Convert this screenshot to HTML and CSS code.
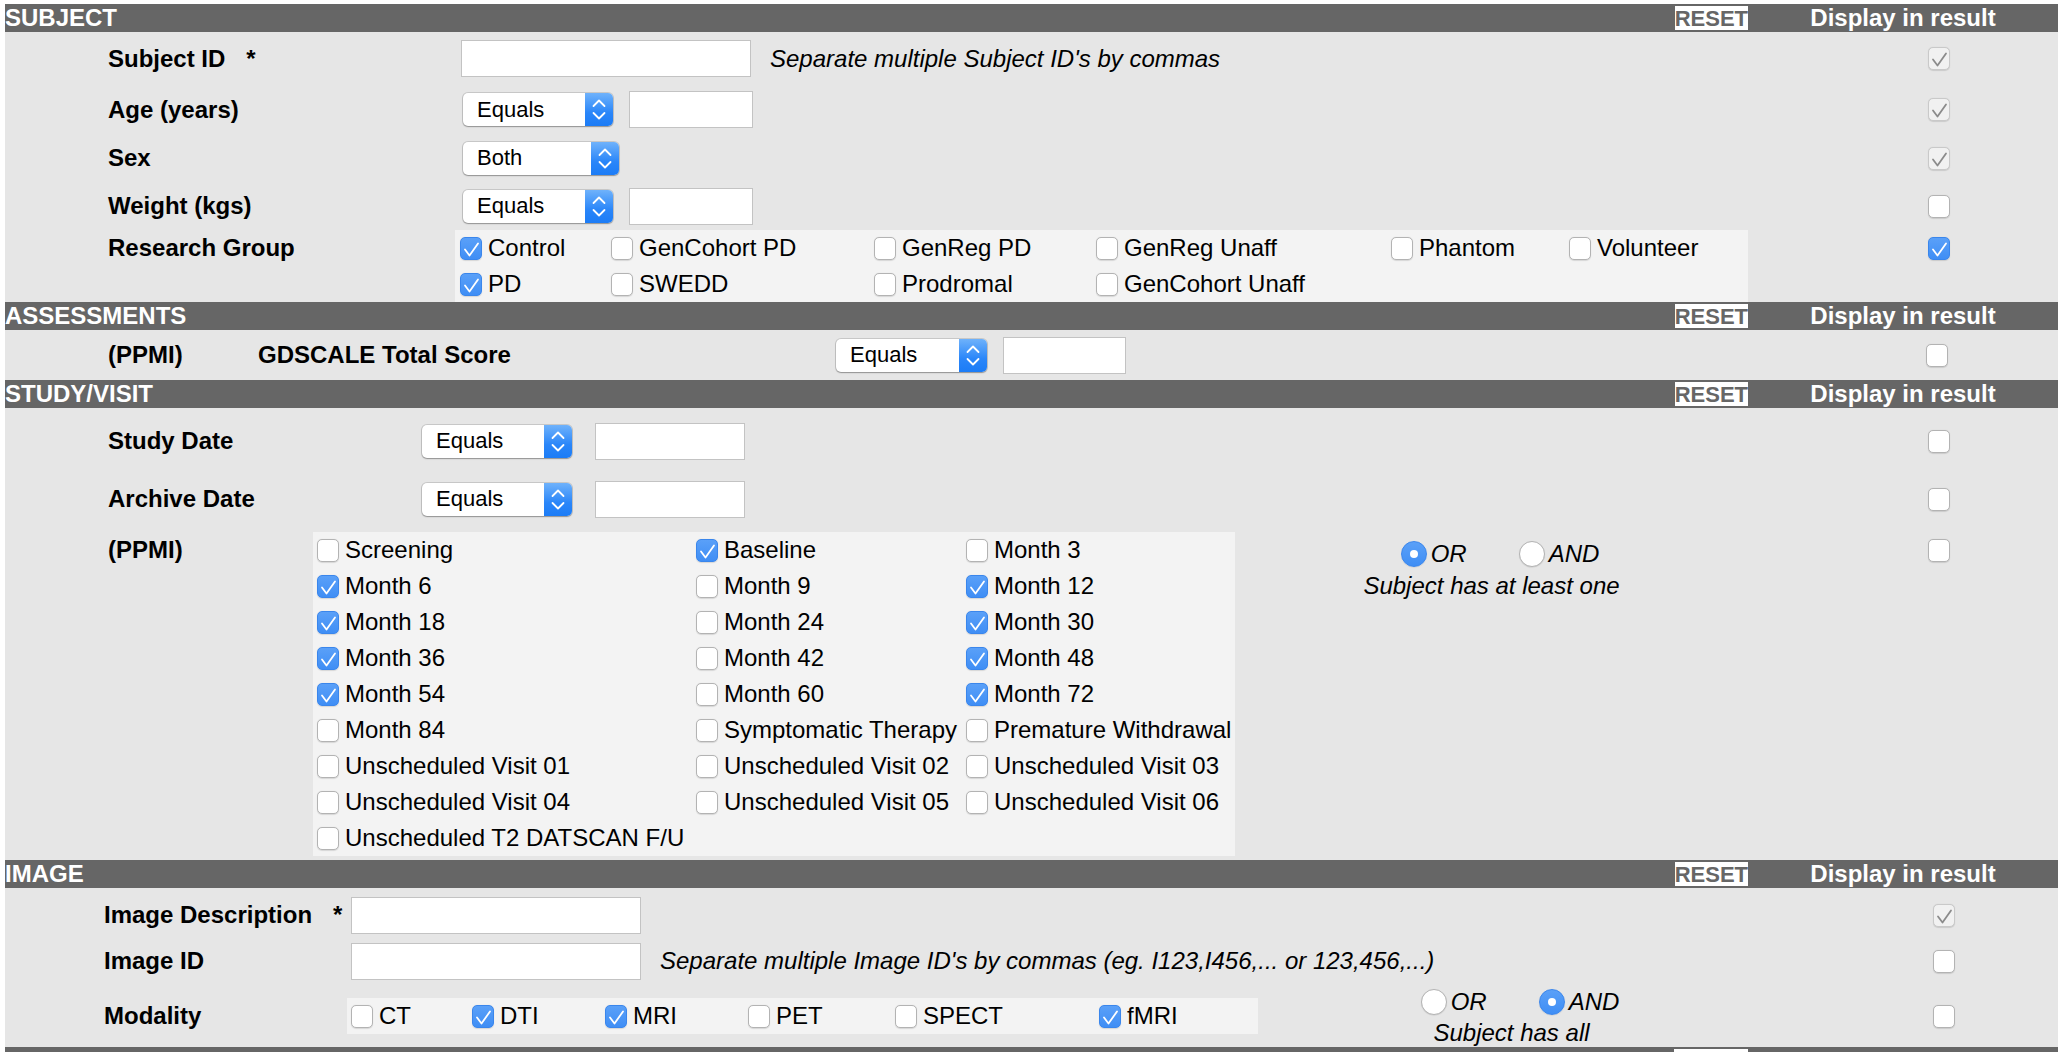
FILE: index.html
```html
<!DOCTYPE html>
<html lang="en">
<head>
<meta charset="utf-8">
<title>Advanced Search</title>
<link rel="stylesheet" href="styles.css">
</head>
<body>
<div class="page">

<section class="sec">
  <div class="bar"><span class="title">SUBJECT</span><span class="reset">RESET</span><span class="disp">Display in result</span></div>

  <div class="row h53">
    <div class="lbl w450">Subject ID<span class="req">*</span></div>
    <div class="ctl"><input type="text" class="txt w290 ml6"><span class="help">Separate multiple Subject ID's by commas</span></div>
    <div class="dcol"><span class="cb dis on"><svg viewBox="0 0 20 21"><path d="M4 11.5L8.5 17.5L17 5.5"/></svg></span></div>
  </div>

  <div class="row h49">
    <div class="lbl w450">Age (years)</div>
    <div class="ctl">
      <div class="sel w150 ml8"><span class="val">Equals</span><span class="arr"><svg viewBox="0 0 28 33"><path d="M8.5 13L14 7.5L19.5 13M8.5 20L14 25.5L19.5 20"/></svg></span></div>
      <input type="text" class="txt w124 ml16">
    </div>
    <div class="dcol"><span class="cb dis on"><svg viewBox="0 0 20 21"><path d="M4 11.5L8.5 17.5L17 5.5"/></svg></span></div>
  </div>

  <div class="row h48">
    <div class="lbl w450">Sex</div>
    <div class="ctl">
      <div class="sel w156 ml8"><span class="val">Both</span><span class="arr"><svg viewBox="0 0 28 33"><path d="M8.5 13L14 7.5L19.5 13M8.5 20L14 25.5L19.5 20"/></svg></span></div>
    </div>
    <div class="dcol"><span class="cb dis on"><svg viewBox="0 0 20 21"><path d="M4 11.5L8.5 17.5L17 5.5"/></svg></span></div>
  </div>

  <div class="row h48">
    <div class="lbl w450">Weight (kgs)</div>
    <div class="ctl">
      <div class="sel w150 ml8"><span class="val">Equals</span><span class="arr"><svg viewBox="0 0 28 33"><path d="M8.5 13L14 7.5L19.5 13M8.5 20L14 25.5L19.5 20"/></svg></span></div>
      <input type="text" class="txt w124 ml16">
    </div>
    <div class="dcol"><span class="cb"></span></div>
  </div>

  <div class="row top">
    <div class="lbl w450 lh36">Research Group</div>
    <div class="grp groups">
      <label class="opt"><span class="cb on"><svg viewBox="0 0 20 21"><path d="M4 11.5L8.5 17.5L17 5.5"/></svg></span>Control</label>
      <label class="opt"><span class="cb"></span>GenCohort PD</label>
      <label class="opt"><span class="cb"></span>GenReg PD</label>
      <label class="opt"><span class="cb"></span>GenReg Unaff</label>
      <label class="opt"><span class="cb"></span>Phantom</label>
      <label class="opt"><span class="cb"></span>Volunteer</label>
      <label class="opt"><span class="cb on"><svg viewBox="0 0 20 21"><path d="M4 11.5L8.5 17.5L17 5.5"/></svg></span>PD</label>
      <label class="opt"><span class="cb"></span>SWEDD</label>
      <label class="opt"><span class="cb"></span>Prodromal</label>
      <label class="opt"><span class="cb"></span>GenCohort Unaff</label>
    </div>
    <div class="dcol"><span class="cb on"><svg viewBox="0 0 20 21"><path d="M4 11.5L8.5 17.5L17 5.5"/></svg></span></div>
  </div>
</section>

<section class="sec">
  <div class="bar"><span class="title">ASSESSMENTS</span><span class="reset">RESET</span><span class="disp">Display in result</span></div>
  <div class="row h50">
    <div class="lbl w253">(PPMI)</div>
    <div class="lbl2 w578">GDSCALE Total Score</div>
    <div class="ctl">
      <div class="sel w151"><span class="val">Equals</span><span class="arr"><svg viewBox="0 0 28 33"><path d="M8.5 13L14 7.5L19.5 13M8.5 20L14 25.5L19.5 20"/></svg></span></div>
      <input type="text" class="txt w123 ml16">
    </div>
    <div class="dcol d-assess"><span class="cb"></span></div>
  </div>
</section>

<section class="sec">
  <div class="bar"><span class="title">STUDY/VISIT</span><span class="reset">RESET</span><span class="disp">Display in result</span></div>

  <div class="row h66">
    <div class="lbl w417">Study Date</div>
    <div class="ctl">
      <div class="sel w150"><span class="val">Equals</span><span class="arr"><svg viewBox="0 0 28 33"><path d="M8.5 13L14 7.5L19.5 13M8.5 20L14 25.5L19.5 20"/></svg></span></div>
      <input type="text" class="txt w150 ml23">
    </div>
    <div class="dcol"><span class="cb"></span></div>
  </div>

  <div class="row h50">
    <div class="lbl w417">Archive Date</div>
    <div class="ctl">
      <div class="sel w150"><span class="val">Equals</span><span class="arr"><svg viewBox="0 0 28 33"><path d="M8.5 13L14 7.5L19.5 13M8.5 20L14 25.5L19.5 20"/></svg></span></div>
      <input type="text" class="txt w150 ml23">
    </div>
    <div class="dcol"><span class="cb"></span></div>
  </div>

  <div class="row top visit-row">
    <div class="lbl w308 lh36">(PPMI)</div>
    <div class="grp visits">
      <label class="opt"><span class="cb"></span>Screening</label>
      <label class="opt"><span class="cb on"><svg viewBox="0 0 20 21"><path d="M4 11.5L8.5 17.5L17 5.5"/></svg></span>Baseline</label>
      <label class="opt"><span class="cb"></span>Month 3</label>
      <label class="opt"><span class="cb on"><svg viewBox="0 0 20 21"><path d="M4 11.5L8.5 17.5L17 5.5"/></svg></span>Month 6</label>
      <label class="opt"><span class="cb"></span>Month 9</label>
      <label class="opt"><span class="cb on"><svg viewBox="0 0 20 21"><path d="M4 11.5L8.5 17.5L17 5.5"/></svg></span>Month 12</label>
      <label class="opt"><span class="cb on"><svg viewBox="0 0 20 21"><path d="M4 11.5L8.5 17.5L17 5.5"/></svg></span>Month 18</label>
      <label class="opt"><span class="cb"></span>Month 24</label>
      <label class="opt"><span class="cb on"><svg viewBox="0 0 20 21"><path d="M4 11.5L8.5 17.5L17 5.5"/></svg></span>Month 30</label>
      <label class="opt"><span class="cb on"><svg viewBox="0 0 20 21"><path d="M4 11.5L8.5 17.5L17 5.5"/></svg></span>Month 36</label>
      <label class="opt"><span class="cb"></span>Month 42</label>
      <label class="opt"><span class="cb on"><svg viewBox="0 0 20 21"><path d="M4 11.5L8.5 17.5L17 5.5"/></svg></span>Month 48</label>
      <label class="opt"><span class="cb on"><svg viewBox="0 0 20 21"><path d="M4 11.5L8.5 17.5L17 5.5"/></svg></span>Month 54</label>
      <label class="opt"><span class="cb"></span>Month 60</label>
      <label class="opt"><span class="cb on"><svg viewBox="0 0 20 21"><path d="M4 11.5L8.5 17.5L17 5.5"/></svg></span>Month 72</label>
      <label class="opt"><span class="cb"></span>Month 84</label>
      <label class="opt"><span class="cb"></span>Symptomatic Therapy</label>
      <label class="opt"><span class="cb"></span>Premature Withdrawal</label>
      <label class="opt"><span class="cb"></span>Unscheduled Visit 01</label>
      <label class="opt"><span class="cb"></span>Unscheduled Visit 02</label>
      <label class="opt"><span class="cb"></span>Unscheduled Visit 03</label>
      <label class="opt"><span class="cb"></span>Unscheduled Visit 04</label>
      <label class="opt"><span class="cb"></span>Unscheduled Visit 05</label>
      <label class="opt"><span class="cb"></span>Unscheduled Visit 06</label>
      <label class="opt"><span class="cb"></span>Unscheduled T2 DATSCAN F/U</label>
    </div>
    <div class="andor ao-visit">
      <div class="ao-line"><span class="ro"><span class="rd on"></span>OR</span><span class="ro"><span class="rd"></span>AND</span></div>
      <div>Subject has at least one</div>
    </div>
    <div class="dcol"><span class="cb"></span></div>
  </div>
</section>

<section class="sec">
  <div class="bar"><span class="title">IMAGE</span><span class="reset">RESET</span><span class="disp">Display in result</span></div>

  <div class="row h54">
    <div class="lbl lbl-img w342">Image Description<span class="req">*</span></div>
    <div class="ctl"><input type="text" class="txt w290 ml4"></div>
    <div class="dcol d-img"><span class="cb dis on"><svg viewBox="0 0 20 21"><path d="M4 11.5L8.5 17.5L17 5.5"/></svg></span></div>
  </div>

  <div class="row h38">
    <div class="lbl lbl-img w342">Image ID</div>
    <div class="ctl"><input type="text" class="txt w290 ml4"><span class="help">Separate multiple Image ID's by commas (eg. I123,I456,... or 123,456,...)</span></div>
    <div class="dcol d-img"><span class="cb"></span></div>
  </div>

  <div class="row top mod-row">
    <div class="lbl lbl-img w342 lh36">Modality</div>
    <div class="grp modality">
      <label class="opt"><span class="cb"></span>CT</label>
      <label class="opt"><span class="cb on"><svg viewBox="0 0 20 21"><path d="M4 11.5L8.5 17.5L17 5.5"/></svg></span>DTI</label>
      <label class="opt"><span class="cb on"><svg viewBox="0 0 20 21"><path d="M4 11.5L8.5 17.5L17 5.5"/></svg></span>MRI</label>
      <label class="opt"><span class="cb"></span>PET</label>
      <label class="opt"><span class="cb"></span>SPECT</label>
      <label class="opt"><span class="cb on"><svg viewBox="0 0 20 21"><path d="M4 11.5L8.5 17.5L17 5.5"/></svg></span>fMRI</label>
    </div>
    <div class="andor ao-img">
      <div class="ao-line"><span class="ro"><span class="rd"></span>OR</span><span class="ro"><span class="rd on"></span>AND</span></div>
      <div>Subject has all</div>
    </div>
    <div class="dcol d-img"><span class="cb"></span></div>
  </div>
</section>

<section class="sec">
  <div class="bar"><span class="title"></span><span class="reset stub"></span><span class="disp"></span></div>
</section>

</div>
</body>
</html>
```

FILE: styles.css
```css
html, body {
  margin: 0;
  padding: 0;
  background: #fff;
}

body {
  font-family: "Liberation Sans", Arial, Helvetica, sans-serif;
  font-size: 24px;
  color: #000;
}

.page {
  margin: 4px 0 0 5px;
  width: 2053px;
  background: #e6e6e6;
}

/* section header bar */
.bar {
  display: flex;
  height: 28px;
  background: #666;
  color: #fff;
  font-weight: bold;
  font-size: 24px;
  line-height: 28px;
  white-space: nowrap;
}
.bar .title { flex: 1; }
.bar .reset {
  align-self: flex-start;
  margin-top: 2px;
  height: 24px;
  line-height: 25px;
  font-size: 22px;
  background: #fff;
  color: #666;
}
.bar .reset.stub { width: 74px; }
.bar .disp {
  width: 310px;
  text-align: center;
}

/* rows */
.row {
  display: flex;
  align-items: center;
}
.row.top { align-items: flex-start; }

.h38 { height: 38px; }
.h48 { height: 48px; }
.h49 { height: 49px; }
.h50 { height: 50px; }
.h53 { height: 53px; }
.h54 { height: 54px; }
.h66 { height: 66px; }

.lbl {
  flex: none;
  box-sizing: border-box;
  padding-left: 103px;
  font-weight: bold;
  white-space: nowrap;
}
.lbl-img { padding-left: 99px; }
.lbl2 {
  flex: none;
  font-weight: bold;
  white-space: nowrap;
}
.lh36 { line-height: 36px; }
.req { margin-left: 21px; }

.w253 { width: 253px; }
.w308 { width: 308px; }
.w342 { width: 342px; }
.w417 { width: 417px; }
.w450 { width: 450px; }
.w578 { width: 578px; }

.ctl {
  flex: 1;
  min-width: 0;
  display: flex;
  align-items: center;
}

.dcol {
  flex: none;
  width: 310px;
  height: 36px;
  box-sizing: border-box;
  padding-left: 180px;
  display: flex;
  align-items: center;
}
.d-assess { padding-left: 178px; }
.d-img { padding-left: 185px; }

/* text inputs */
.txt {
  box-sizing: border-box;
  height: 37px;
  margin: 0;
  padding: 0 6px;
  border: 1px solid #c3c3c3;
  border-radius: 0;
  background: #fff;
  font: 22px "Liberation Sans", Arial, sans-serif;
  outline: none;
}
.w123 { width: 123px; }
.w124 { width: 124px; }
.w150 { width: 150px; }
.w151 { width: 151px; }
.w156 { width: 156px; }
.w290 { width: 290px; }
.ml4 { margin-left: 4px; }
.ml6 { margin-left: 6px; }
.ml8 { margin-left: 8px; }
.ml16 { margin-left: 16px; }
.ml23 { margin-left: 23px; }

.help {
  margin-left: 19px;
  font-style: italic;
  white-space: nowrap;
}

/* mac-style select */
.sel {
  flex: none;
  display: flex;
  align-items: center;
  box-sizing: border-box;
  height: 33px;
  border-radius: 5px;
  background: #fff;
  box-shadow: 0 0 0 1px rgba(0, 0, 0, 0.13), 0 1px 1.5px rgba(0, 0, 0, 0.28);
  overflow: hidden;
  font-size: 22px;
}
.sel .val {
  flex: 1;
  padding-left: 14px;
  white-space: nowrap;
}
.sel .arr {
  flex: none;
  width: 28px;
  height: 33px;
  background: linear-gradient(#6fb2fb, #2a86f9 60%, #1c7cf6);
}
.sel .arr svg {
  display: block;
  width: 28px;
  height: 33px;
  fill: none;
  stroke: #fff;
  stroke-width: 1.8;
  stroke-linecap: round;
  stroke-linejoin: round;
}

/* checkboxes */
.cb {
  flex: none;
  position: relative;
  display: inline-block;
  box-sizing: border-box;
  width: 22px;
  height: 23px;
  border: 1px solid #b3b3b3;
  border-radius: 5px;
  background: #fff;
  box-shadow: 0 0.5px 1px rgba(0, 0, 0, 0.12);
}
.cb.on {
  background: linear-gradient(#5aa0f8, #3f8ef5);
  border-color: #3a86ec;
}
.cb.dis {
  background: #f1f1f1;
  border-color: #c9c9c9;
}
.cb svg {
  display: block;
  width: 20px;
  height: 21px;
  fill: none;
  stroke: #fff;
  stroke-width: 1.8;
  stroke-linecap: round;
  stroke-linejoin: round;
}
.cb.dis svg { stroke: #8b8b8b; }

/* option groups */
.grp {
  flex: none;
  display: grid;
  box-sizing: border-box;
  background: #f3f3f3;
}
.groups {
  flex: 1;
  padding-left: 5px;
  grid-template-columns: 151px 263px 222px 295px 178px 1fr;
}
.visits {
  width: 922px;
  padding-left: 4px;
  grid-template-columns: 379px 270px 1fr;
}
.modality {
  width: 911px;
  padding-left: 4px;
  grid-template-columns: 121px 133px 143px 147px 204px 1fr;
}
.opt {
  display: flex;
  align-items: center;
  height: 36px;
  white-space: nowrap;
}
.opt .cb { margin-right: 6px; }

.visit-row { padding: 8px 0 4px; }
.mod-row {
  height: 67px;
  box-sizing: border-box;
  padding-top: 18px;
}

/* and/or radios */
.andor {
  flex: 1;
  margin-top: 6px;
  text-align: center;
  font-style: italic;
  white-space: nowrap;
}
.ao-visit { line-height: 32px; }
.ao-img {
  line-height: 31px;
  margin-top: -12px;
  padding-left: 17px;
}
.ao-line {
  display: flex;
  justify-content: center;
  align-items: center;
  padding-left: 17px;
}
.ro {
  display: flex;
  align-items: center;
}
.ro + .ro { margin-left: 52px; }
.rd {
  position: relative;
  flex: none;
  box-sizing: border-box;
  width: 26px;
  height: 26px;
  margin-right: 4px;
  border: 1px solid #b3b3b3;
  border-radius: 50%;
  background: #fff;
  box-shadow: 0 0.5px 1px rgba(0, 0, 0, 0.12);
}
.rd.on {
  background: linear-gradient(#5aa0f8, #3f8ef5);
  border-color: #3a86ec;
}
.rd.on::after {
  content: "";
  position: absolute;
  left: 50%;
  top: 50%;
  width: 8px;
  height: 8px;
  margin: -4px 0 0 -4px;
  border-radius: 50%;
  background: #fff;
}
```
